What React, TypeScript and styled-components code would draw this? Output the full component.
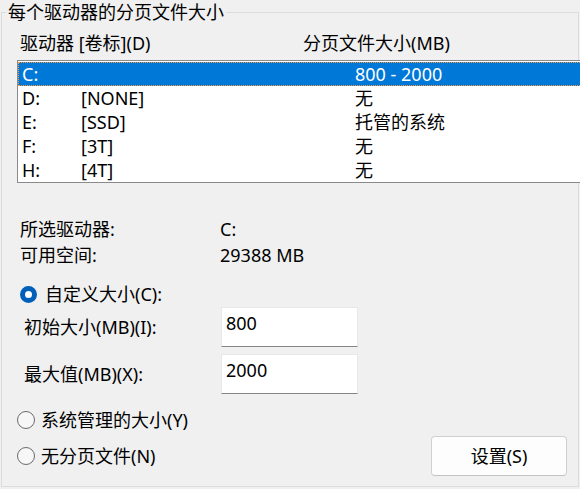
import React from "react";
import styled, { createGlobalStyle } from "styled-components";

const GlobalStyle = createGlobalStyle`
  html, body {
    margin: 0;
    padding: 0;
    background: #f0f0f0;
    overflow: hidden;
  }
  body {
    font-family: "Noto Sans", "Noto Sans CJK SC", sans-serif;
    font-size: 18px;
    color: #000;
  }
`;

const GroupBox = styled.fieldset`
  width: 578px;
  box-sizing: border-box;
  margin: 0 0 0 1px;
  padding: 0 0 10px 0;
  min-width: 0;
  border: 1px solid #dcdcdc;
`;

const Title = styled.legend`
  margin-left: 4px;
  padding: 0 2px;
  line-height: 24px;
`;

const ColumnHeader = styled.div`
  display: grid;
  grid-template-columns: 283px 1fr;
  margin-top: 7px;
  padding-left: 18px;
  line-height: 24px;
`;

const DriveList = styled.div`
  margin: 5px -4px 0 15px;
  padding-top: 1px;
  border: 1px solid #8a8a8a;
  border-right: none;
  background: #fff;
`;

const DriveRow = styled.div<{ $selected?: boolean }>`
  display: grid;
  grid-template-columns: 59px 274px 1fr;
  height: 24px;
  line-height: 24px;
  padding-left: 4px;
  background: ${(p) => (p.$selected ? "#0078d7" : "transparent")};
  color: ${(p) => (p.$selected ? "#fff" : "#000")};
  outline: ${(p) => (p.$selected ? "1px dotted #ff9a3c" : "none")};
  outline-offset: -1px;
  white-space: nowrap;
`;

const InfoBlock = styled.div`
  margin-top: 33px;
`;

const InfoRow = styled.div`
  display: grid;
  grid-template-columns: 200px 1fr;
  padding-left: 18px;
  line-height: 26px;
`;

const RadioRow = styled.label<{ $indent: number; $gap: number }>`
  display: flex;
  align-items: center;
  gap: ${(p) => p.$gap}px;
  height: 26px;
  padding-left: ${(p) => p.$indent}px;
  line-height: 26px;
`;

const RadioDot = styled.span<{ $checked?: boolean }>`
  display: inline-block;
  box-sizing: border-box;
  flex: none;
  width: ${(p) => (p.$checked ? 17 : 18)}px;
  height: ${(p) => (p.$checked ? 17 : 18)}px;
  border-radius: 50%;
  background: ${(p) => (p.$checked ? "#fff" : "#f7f7f7")};
  border: ${(p) => (p.$checked ? "5px solid #005fb8" : "1px solid #6b6b6b")};
`;

const FieldRow = styled.div<{ $top: number }>`
  display: grid;
  grid-template-columns: 197px 137px;
  align-items: center;
  margin-top: ${(p) => p.$top}px;
  padding-left: 22px;
`;

const FieldLabel = styled.span`
  line-height: 24px;
`;

const TextBox = styled.div`
  box-sizing: border-box;
  height: 40px;
  padding: 3px 4px 0;
  line-height: 24px;
  background: #fff;
  border: 1px solid #e8e8e8;
  border-bottom-color: #868686;
`;

const SystemRow = styled.div`
  margin-top: 13px;
`;

const BottomRow = styled.div`
  display: flex;
  align-items: center;
  justify-content: space-between;
  height: 40px;
  margin-top: 3px;
  padding-right: 11px;
`;

const Button = styled.button`
  box-sizing: border-box;
  width: 136px;
  height: 40px;
  font: inherit;
  line-height: 24px;
  color: #000;
  background: #fdfdfd;
  border: 1px solid #d0d0d0;
  border-bottom-color: #c2c2c2;
  border-radius: 4px;
`;

const CustomBlock = styled.div`
  margin-top: 13px;
`;

const drives = [
  { letter: "C:", label: "", size: "800 - 2000" },
  { letter: "D:", label: "[NONE]", size: "无" },
  { letter: "E:", label: "[SSD]", size: "托管的系统" },
  { letter: "F:", label: "[3T]", size: "无" },
  { letter: "H:", label: "[4T]", size: "无" },
];

const App = () => {
  return (
    <>
      <GlobalStyle />
      <GroupBox>
        <Title>每个驱动器的分页文件大小</Title>

        <ColumnHeader>
          <span>驱动器 [卷标](D)</span>
          <span>分页文件大小(MB)</span>
        </ColumnHeader>

        <DriveList>
          {drives.map((d, i) => (
            <DriveRow key={d.letter} $selected={i === 0}>
              <span>{d.letter}</span>
              <span>{d.label}</span>
              <span>{d.size}</span>
            </DriveRow>
          ))}
        </DriveList>

        <InfoBlock>
          <InfoRow>
            <span>所选驱动器:</span>
            <span>C:</span>
          </InfoRow>
          <InfoRow>
            <span>可用空间:</span>
            <span>29388 MB</span>
          </InfoRow>
        </InfoBlock>

        <CustomBlock>
          <RadioRow $indent={18} $gap={8}>
            <RadioDot $checked />
            <span>自定义大小(C):</span>
          </RadioRow>
          <FieldRow $top={0}>
            <FieldLabel>初始大小(MB)(I):</FieldLabel>
            <TextBox>800</TextBox>
          </FieldRow>
          <FieldRow $top={7}>
            <FieldLabel>最大值(MB)(X):</FieldLabel>
            <TextBox>2000</TextBox>
          </FieldRow>
        </CustomBlock>

        <SystemRow>
          <RadioRow $indent={15} $gap={6}>
            <RadioDot />
            <span>系统管理的大小(Y)</span>
          </RadioRow>
        </SystemRow>

        <BottomRow>
          <RadioRow $indent={15} $gap={6}>
            <RadioDot />
            <span>无分页文件(N)</span>
          </RadioRow>
          <Button>设置(S)</Button>
        </BottomRow>
      </GroupBox>
    </>
  );
};

export default App;
